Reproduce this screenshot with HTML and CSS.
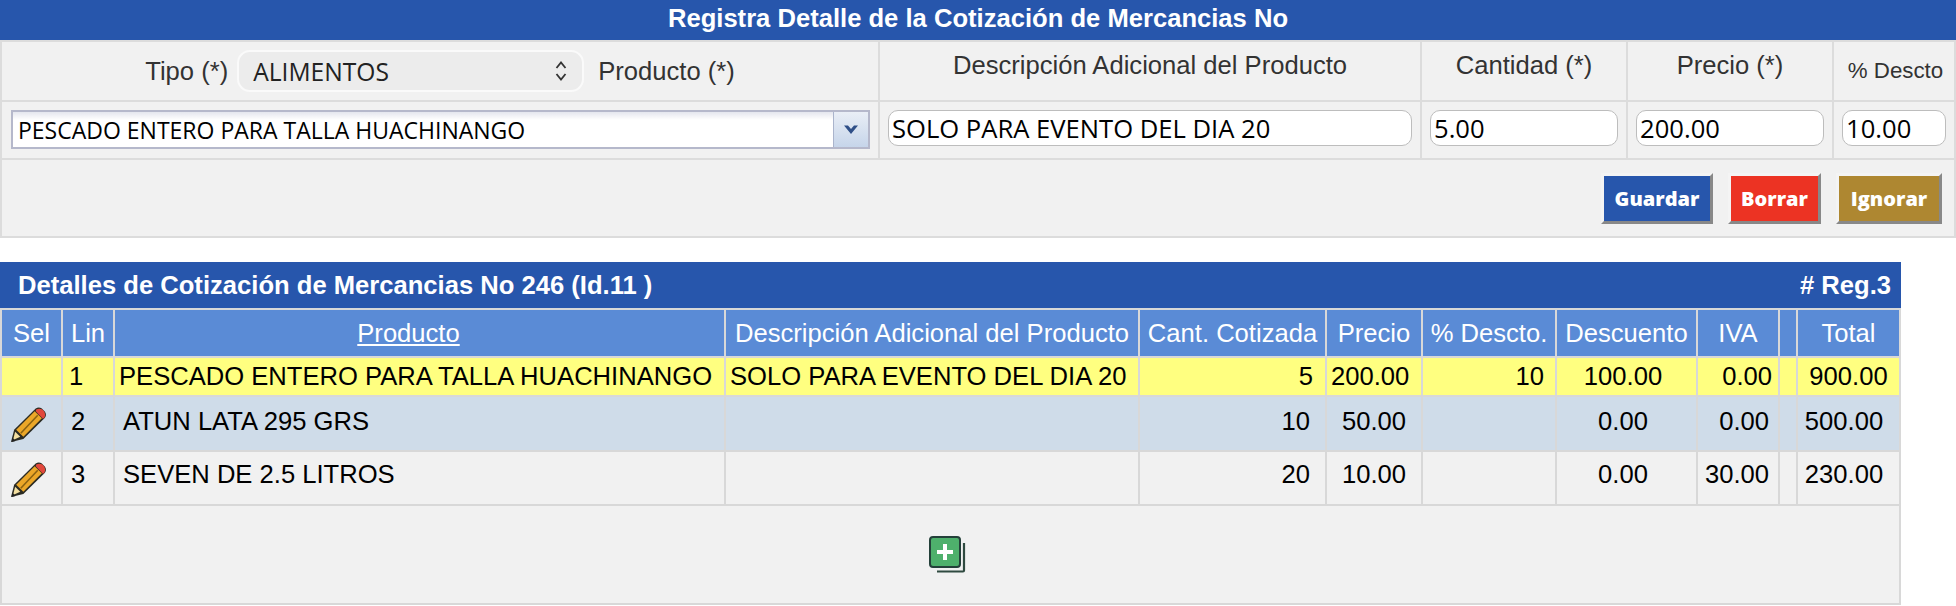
FILE: index.html
```html
<!DOCTYPE html>
<html lang="es">
<head>
<meta charset="utf-8">
<title>Cotización de Mercancias</title>
<link rel="stylesheet" href="styles.css">
</head>
<body>
<section class="form-panel">
  <h1 class="form-title">Registra Detalle de la Cotización de Mercancias No</h1>
  <table class="form-table">
    <colgroup>
      <col class="fc1"><col class="fc2"><col class="fc3"><col class="fc4"><col class="fc5">
    </colgroup>
    <tr class="label-row">
      <td>
        <div class="tipo-line">
          <span>Tipo (*)</span>
          <div class="tipo-select">
            <span>ALIMENTOS</span>
            <svg class="updown" width="12" height="22" viewBox="0 0 12 22"><path d="M1.5 8 6 2.500 10.500 8M1.500 14 6 19.500 10.500 14" fill="none" stroke="#333" stroke-width="1.800"/></svg>
          </div>
          <span>Producto (*)</span>
        </div>
      </td>
      <td class="lab-up">Descripción Adicional del Producto</td>
      <td class="lab-up">Cantidad (*)</td>
      <td class="lab-up">Precio (*)</td>
      <td class="lab-small">% Descto</td>
    </tr>
    <tr class="input-row">
      <td>
        <div class="combo">
          <span class="combo-text">PESCADO ENTERO PARA TALLA HUACHINANGO</span>
          <span class="combo-btn">
            <svg width="16" height="11" viewBox="0 0 16 11"><path d="M1 1.500h4l3 3.500 3-3.500h4L8 10z" fill="#2f4f88"/></svg>
          </span>
        </div>
      </td>
      <td><input class="field f-desc" type="text" value="SOLO PARA EVENTO DEL DIA 20"></td>
      <td><input class="field f-cant" type="text" value="5.00"></td>
      <td><input class="field f-cant" type="text" value="200.00"></td>
      <td><input class="field f-dto" type="text" value="10.00"></td>
    </tr>
    <tr class="button-row">
      <td colspan="5">
        <div class="buttons">
          <button class="btn btn-blue" type="button">Guardar</button>
          <button class="btn btn-red" type="button">Borrar</button>
          <button class="btn btn-gold" type="button">Ignorar</button>
        </div>
      </td>
    </tr>
  </table>
</section>

<section class="list-panel">
  <div class="list-title">
    <span class="list-name">Detalles de Cotización de Mercancias No 246 (Id.11 )</span>
    <span class="list-count"># Reg.3</span>
  </div>
  <table class="list-table">
    <colgroup>
      <col class="c1"><col class="c2"><col class="c3"><col class="c4"><col class="c5"><col class="c6"><col class="c7"><col class="c8"><col class="c9"><col class="c10"><col class="c11">
    </colgroup>
    <thead>
      <tr>
        <th>Sel</th><th>Lin</th><th class="th-prod"><a class="sort" href="#">Producto</a></th><th>Descripción Adicional del Producto</th><th>Cant. Cotizada</th><th>Precio</th><th>% Descto.</th><th>Descuento</th><th>IVA</th><th></th><th>Total</th>
      </tr>
    </thead>
    <tbody>
      <tr class="row-sel">
        <td></td><td class="pl-n">1</td><td class="pl-l">PESCADO ENTERO PARA TALLA HUACHINANGO</td><td class="pl-l">SOLO PARA EVENTO DEL DIA 20</td><td class="num">5</td><td class="pl-l">200.00</td><td class="num-d">10</td><td class="ctr dsc">100.00</td><td class="num-s">0.00</td><td></td><td class="ctr">900.00</td>
      </tr>
      <tr class="row-a">
        <td class="ico">
          <svg class="pencil" width="37" height="37" viewBox="0 0 36 36"><path d="M1 35 4 23 25 2.500q3-2 6 0l3 3q2 3 0 6L13 32z" fill="#2b2b22"/><path d="M3 33 5 25 10 30z" fill="#f3dfa0"/><path d="M1.500 35l1-4 3 3z" fill="#222"/><path d="M6 23 24 5l7 7-18 18z" fill="#eba728"/><path d="M10.500 26.500 27 9" stroke="#8a6212" stroke-width="1.500"/><path d="M25.500 3.500q3-1.500 6 0l2 2q1.500 3 0 6l-1.500 1L25 5z" fill="#e2483c"/></svg>
        </td>
        <td class="pl-m">2</td><td class="pl-m">ATUN LATA 295 GRS</td><td></td><td class="num-c">10</td><td class="ctr">50.00</td><td></td><td class="ctr dsc">0.00</td><td class="num-m">0.00</td><td></td><td class="ctr tot">500.00</td>
      </tr>
      <tr class="row-b">
        <td class="ico">
          <svg class="pencil" width="37" height="37" viewBox="0 0 36 36"><path d="M1 35 4 23 25 2.500q3-2 6 0l3 3q2 3 0 6L13 32z" fill="#2b2b22"/><path d="M3 33 5 25 10 30z" fill="#f3dfa0"/><path d="M1.500 35l1-4 3 3z" fill="#222"/><path d="M6 23 24 5l7 7-18 18z" fill="#eba728"/><path d="M10.500 26.500 27 9" stroke="#8a6212" stroke-width="1.500"/><path d="M25.500 3.500q3-1.500 6 0l2 2q1.500 3 0 6l-1.500 1L25 5z" fill="#e2483c"/></svg>
        </td>
        <td class="pl-m">3</td><td class="pl-m">SEVEN DE 2.5 LITROS</td><td></td><td class="num-c">20</td><td class="ctr">10.00</td><td></td><td class="ctr dsc">0.00</td><td class="num-m">30.00</td><td></td><td class="ctr tot">230.00</td>
      </tr>
    </tbody>
    <tfoot>
      <tr>
        <td colspan="11" class="foot">
          <svg class="add" width="37" height="37" viewBox="0 0 37 37"><path d="M35 7v27.500a1 1 0 0 1-1 1H8" fill="none" stroke="#2f4a40" stroke-width="2.200"/><rect x="1" y="1" width="30" height="30" rx="3" fill="#4eb06c" stroke="#24403a" stroke-width="2"/><path d="M16 8v16M8 16h16" stroke="#fff" stroke-width="4"/></svg>
        </td>
      </tr>
    </tfoot>
  </table>
</section>
</body>
</html>
```

FILE: styles.css
```css
* { box-sizing: border-box; }
html, body { margin: 0; padding: 0; background: #fff; }
body { font-family: "Liberation Sans", Arial, sans-serif; color: #000; }

.form-title {
  margin: 0;
  height: 40px;
  line-height: 36px;
  background: #2756ac;
  color: #fff;
  font-size: 25.600px;
  font-weight: bold;
  text-align: center;
}
.form-table {
  width: 1956px;
  table-layout: fixed;
  border-collapse: collapse;
  background: #f1f1f1;
  color: #333;
  font-size: 25.600px;
}
.fc1 { width: 878px; }
.fc2 { width: 542px; }
.fc3 { width: 206px; }
.fc4 { width: 206px; }
.fc5 { width: 122px; }
.form-table td { border: 2px solid #dcdcdc; padding: 0; text-align: center; }
.label-row { height: 60px; }
.input-row { height: 58px; }
.input-row td { vertical-align: top; padding-top: 8px; }
.button-row { height: 78px; }
.button-row td { vertical-align: top; padding-top: 13px; }
.lab-up { vertical-align: top; padding-top: 9px !important; }
.form-table .lab-small { font-size: 22.300px; vertical-align: middle; padding-left: 3px; }
.tipo-line { display: flex; align-items: center; justify-content: center; gap: 9px; }
.tipo-select {
  width: 347px;
  height: 42px;
  background: #ececec;
  border: 2px solid #fafafa;
  border-radius: 13px;
  display: flex;
  align-items: center;
  justify-content: space-between;
  padding: 0 15px 0 14px;
  font-family: "Open Sans", "Liberation Sans", sans-serif;
  font-size: 24.600px;
  color: #222;
  margin-right: 5px;
}
.combo {
  margin: 0 8px 0 9px;
  height: 39px;
  border: 2px solid #b5b8cb;
  display: flex;
  background: linear-gradient(#e4e6ee 0, #fff 8px);
  text-align: left;
}
.combo-text {
  flex: 1;
  font-family: "Open Sans", "Liberation Sans", sans-serif;
  font-size: 23px;
  line-height: 37px;
  color: #000;
  padding-left: 5px;
  white-space: nowrap;
}
.combo-btn {
  width: 35px;
  display: flex;
  align-items: center;
  justify-content: center;
  border-left: 1px solid #aab4cc;
  background: linear-gradient(#e9eef6, #c6d5ea);
}
.field {
  display: block;
  height: 36px;
  border: 1px solid #bdbdbd;
  border-radius: 10px;
  background: #fff;
  font-family: "Open Sans", "Liberation Sans", sans-serif;
  font-size: 25.600px;
  color: #000;
  padding: 0 3px;
}
.f-desc { width: 524px; margin-left: 8px; }
.f-cant { width: 188px; margin-left: 8px; }
.f-dto { width: 104px; margin-left: 8px; }
.buttons { display: flex; justify-content: flex-end; gap: 15px; padding: 0 12px 0 0; }
.btn {
  height: 51px;
  border: 3px solid;
  border-color: #f4f4f4 #888 #888 #f4f4f4;
  color: #fff;
  font-family: "Open Sans", sans-serif;
  font-size: 20px;
  font-weight: 800;
  padding: 0;
}
.btn-blue { width: 112px; background: #2756ac; }
.btn-red { width: 93px; background: #ec3323; }
.btn-gold { width: 106px; background: #ae8731; }

.list-panel { margin-top: 24px; }
.list-title {
  width: 1901px;
  height: 46px;
  background: #2756ac;
  color: #fff;
  font-weight: bold;
  font-size: 25.600px;
  display: flex;
  align-items: center;
  justify-content: space-between;
  padding: 0 10px 0 18px;
}
.list-table {
  width: 1901px;
  table-layout: fixed;
  border-collapse: collapse;
  background: #f1f1f1;
  font-size: 25.600px;
}
.c1 { width: 61px; } .c2 { width: 52px; } .c3 { width: 611px; } .c4 { width: 414px; }
.c5 { width: 187px; } .c6 { width: 96px; } .c7 { width: 134px; } .c8 { width: 141px; }
.c9 { width: 82px; } .c10 { width: 18px; } .c11 { width: 103px; }
.list-table th, .list-table td { border: 2px solid #d8d8d8; padding: 0; white-space: nowrap; }
.list-table th { height: 48px; background: #5a8bd6; color: #fff; font-weight: normal; text-align: center; }
.list-table .th-prod { padding-right: 22px; }
.sort { color: #fff; text-decoration: underline; }
.row-sel td { height: 39px; background: #ffff80; }
.row-a td { height: 55px; background: #cfdce9; }
.row-b td { height: 54px; background: #f1f1f1; }
.row-a td { vertical-align: top; padding-top: 10px; }
.row-b td { vertical-align: top; padding-top: 8px; }
.list-table td.ico { padding: 9px 0 0 8px; }
.pencil { display: block; }
.pl-l { padding-left: 4px !important; }
.pl-n { padding-left: 6px !important; }
.pl-m { padding-left: 8px !important; }
.num { text-align: right; padding-right: 12px !important; }
.num-c { text-align: right; padding-right: 15px !important; }
.num-d { text-align: right; padding-right: 11px !important; }
.num-m { text-align: right; padding-right: 9px !important; }
.num-s { text-align: right; padding-right: 6px !important; }
.ctr { text-align: center; }
.dsc { padding-right: 7px !important; }
.tot { padding-right: 9px !important; }
.foot { height: 99px; text-align: center; }
.add { display: block; margin: 0 auto; transform: translateX(-3px); }
```
